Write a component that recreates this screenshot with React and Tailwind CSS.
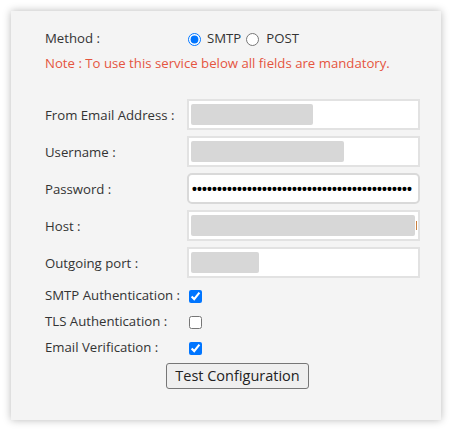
import React from "react";

const font = { fontFamily: '"Open Sans", "Noto Sans", sans-serif' };

function Field({ label, children }) {
  return (
    <div className="flex items-center h-[31px]">
      <div className="w-[142px] shrink-0 text-[13.2px] text-[#333] pt-[2px]">{label}</div>
      {children}
    </div>
  );
}

function Box({ children, rounded }) {
  return (
    <div
      className={`relative w-[233px] h-[31px] bg-white border-2 ${
        rounded ? "rounded-[5px] border-[#d9d9d9]" : "border-[#e2e2e2]"
      } flex items-center pl-[2px] overflow-hidden`}
    >
      {children}
    </div>
  );
}

function Blur({ w }) {
  return <div className="h-[21px] bg-[#d7d7d7] rounded-[2px]" style={{ width: w }} />;
}

function CheckRow({ label, checked }) {
  return (
    <div className="flex items-center h-[26px]">
      <div className="w-[144px] shrink-0 text-[13.2px] text-[#333]">{label}</div>
      <input type="checkbox" defaultChecked={checked} className="m-0 w-[13px] h-[13px]" />
    </div>
  );
}

export default function App() {
  return (
    <div className="w-[452px] h-[432px] bg-white pt-[11px] pl-[11px]" style={font}>
      <div className="w-[430px] h-[409px] bg-[#f4f4f4] shadow-[0_0_8px_rgba(0,0,0,0.28)] pl-[34px] pr-[11px] pt-[16px]">
        <div className="flex items-center h-[24px]">
          <div className="w-[143px] shrink-0 text-[13.2px] text-[#333]">Method :</div>
          <input type="radio" name="m" defaultChecked className="m-0 w-[13px] h-[13px]" />
          <span className="ml-[6px] text-[13.2px] text-[#333]">SMTP</span>
          <input type="radio" name="m" className="m-0 ml-[5px] w-[13px] h-[13px]" />
          <span className="ml-[7px] text-[13.2px] text-[#333]">POST</span>
        </div>
        <div className="mt-[1px] h-[24px] flex items-center text-[13.2px] text-[#e5553f]">
          Note : To use this service below all fields are mandatory.
        </div>
        <div className="mt-[23px] flex flex-col gap-[6px]">
          <Field label="From Email Address :">
            <Box>
              <Blur w={122} />
            </Box>
          </Field>
          <Field label="Username :">
            <Box>
              <Blur w={153} />
            </Box>
          </Field>
          <Field label="Password :">
            <Box rounded>
              <span
                className="ml-[1px] text-[14px] font-bold leading-none text-black whitespace-nowrap tracking-[0.1px]"
                style={{ fontFamily: '"Liberation Sans", Arial, sans-serif' }}
              >
                {"•".repeat(44)}
              </span>
            </Box>
          </Field>
          <Field label="Host :">
            <Box>
              <Blur w={224} />
              <span className="ml-[1px] w-[1px] h-[9px] bg-[#c9803f]" />
            </Box>
          </Field>
          <Field label="Outgoing port :">
            <Box>
              <Blur w={68} />
            </Box>
          </Field>
        </div>
        <div className="mt-[5px]">
          <CheckRow label="SMTP Authentication :" checked />
          <CheckRow label="TLS Authentication :" />
          <CheckRow label="Email Verification :" checked />
        </div>
        <div className="mt-[2px] flex justify-center">
          <button className="h-[26px] px-[8px] bg-[#efefef] border border-[#767676] rounded-[3px] text-[14.5px] text-[#222] leading-none">
            Test Configuration
          </button>
        </div>
      </div>
    </div>
  );
}
